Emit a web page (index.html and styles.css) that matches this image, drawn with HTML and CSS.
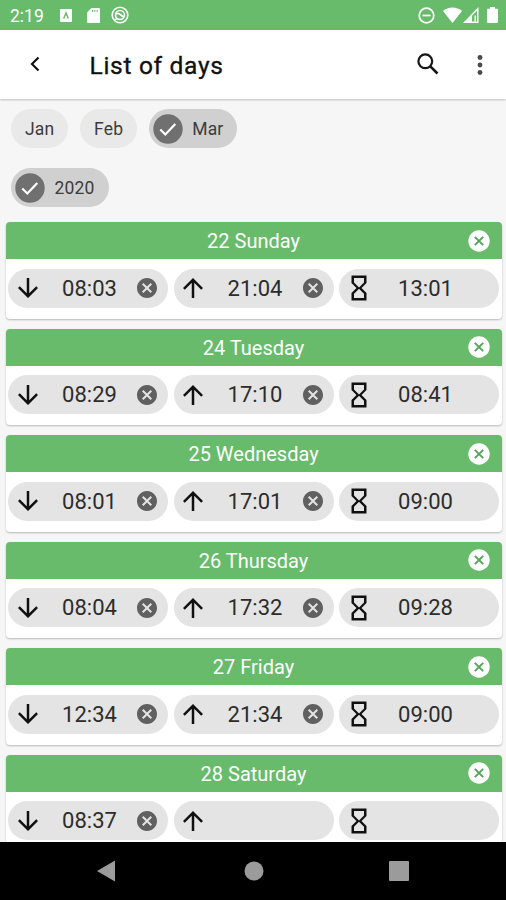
FILE: index.html
```html
<!DOCTYPE html>
<html lang="en">
<head>
<meta charset="utf-8">
<title>List of days</title>
<link rel="stylesheet" href="styles.css">
</head>
<body>
<svg class="defs" aria-hidden="true">
  <symbol id="down" viewBox="0 0 24 24"><path d="M20 12l-1.41-1.41L13 16.17V4h-2v12.17l-5.58-5.59L4 12l8 8 8-8z"/></symbol>
  <symbol id="up" viewBox="0 0 24 24"><path d="M4 12l1.41 1.41L11 7.83V20h2V7.83l5.58 5.59L20 12l-8-8-8 8z"/></symbol>
  <symbol id="glass" viewBox="0 0 24 24"><path d="M6 2v6h.01L6 8.01 10 12l-4 4 .01.01H6V22h12v-5.99h-.01L18 16l-4-4 4-3.99-.01-.01H18V2H6zm10 14.5V20H8v-3.500l4-4 4 4zm-4-5l-4-4V4h8v3.500l-4 4z"/></symbol>
  <symbol id="clear" viewBox="0 0 24 24"><path d="M12 2C6.47 2 2 6.470 2 12s4.470 10 10 10 10-4.470 10-10S17.530 2 12 2zm5 13.590L15.590 17 12 13.410 8.410 17 7 15.590 10.590 12 7 8.410 8.410 7 12 10.590 15.590 7 17 8.410 13.410 12 17 15.590z"/></symbol>
  <symbol id="remove" viewBox="0 0 22 22"><circle cx="11" cy="11" r="10.700"/><path class="cross" d="M6.800 6.800l8.400 8.400M15.200 6.800l-8.400 8.400"/></symbol>
  <symbol id="check" viewBox="0 0 30 30"><circle cx="15" cy="15" r="14.700"/><path class="tick" d="M7.300 15.500l5 5 10-10.500"/></symbol>
</svg>
<div class="screen">
  <header class="status">
    <span class="clock">2:19</span>
    <svg class="keyboard" width="12" height="13" viewBox="0 0 12 13"><rect width="12" height="13" rx="1" fill="#fff"/><path d="M3.700 9.500L6 4l2.300 5.500" fill="none" stroke="#67bb6b" stroke-width="1.500"/></svg>
    <svg class="card-icon" width="13" height="15" viewBox="0 0 13 15"><path d="M4.500 0H12a1 1 0 0 1 1 1v13a1 1 0 0 1-1 1H1a1 1 0 0 1-1-1V4.500z" fill="#fff"/><path d="M5.500 2v2M7.800 2v2M10.100 2v2" stroke="#67bb6b" stroke-width="1"/></svg>
    <svg class="sync" width="18" height="18" viewBox="0 0 18 18" fill="none" stroke="#fff"><circle cx="9" cy="9" r="7.800" stroke-width="1.600"/><circle cx="9" cy="9" r="4.500" stroke-width="1.600"/><path d="M5 8c3.500-2.500 4 2 8 3M3.500 13.500l4-1" stroke-width="1.700"/></svg>
    <svg class="dnd" width="17" height="17" viewBox="0 0 17 17" fill="none" stroke="#fff" stroke-width="1.700"><circle cx="8.500" cy="8.500" r="7.300"/><path d="M4.500 8.500h8"/></svg>
    <svg class="wifi" width="19" height="16" viewBox="0 0 19 16"><path d="M0 4C5-.7 14-.7 19 4L9.500 16z" fill="#fff"/></svg>
    <svg class="signal" width="16" height="16" viewBox="0 0 16 16"><path fill="#fff" fill-rule="evenodd" d="M15.500 0v16H0zM14 3.700L9 8.700v5.800h5z"/><path fill="#fff" d="M11.500 8.500H13v6h-1.500z"/></svg>
    <svg class="battery" width="11" height="16" viewBox="0 0 11 16"><path d="M3 0h5v1.700h2.200a.8.8 0 0 1 .8.800V15a1 1 0 0 1-1 1H1a1 1 0 0 1-1-1V2.500a.8.8 0 0 1 .8-.8H3z" fill="#fff"/></svg>
  </header>
  <div class="toolbar">
    <svg class="back" width="10" height="16" viewBox="0 0 10 16"><path d="M8.500 1.500L2 8l6.500 6.500" fill="none" stroke="#111" stroke-width="2.200"/></svg>
    <h1>List of days</h1>
    <svg class="search" width="22" height="22" viewBox="0 0 22 22" fill="none" stroke="#151515"><circle cx="8.300" cy="8.300" r="6.900" stroke-width="2.200"/><path d="M13.300 13.300l7.200 7.200" stroke-width="2.600"/></svg>
    <svg class="more" width="6" height="20" viewBox="0 0 6 20" fill="#4a4a4a"><circle cx="3" cy="2.500" r="2.450"/><circle cx="3" cy="10" r="2.450"/><circle cx="3" cy="17.500" r="2.450"/></svg>
  </div>
  <main>
    <div class="chips">
      <span class="chip">Jan</span><span class="chip">Feb</span><span class="chip selected"><svg><use href="#check"/></svg>Mar</span>
    </div>
    <div class="chips year">
      <span class="chip selected"><svg><use href="#check"/></svg>2020</span>
    </div>
    <div class="days">
      <section class="day"><h2>22 Sunday<svg><use href="#remove"/></svg></h2><div class="times">
        <div class="time"><svg><use href="#down"/></svg><b>08:03</b><svg class="clear"><use href="#clear"/></svg></div>
        <div class="time"><svg><use href="#up"/></svg><b>21:04</b><svg class="clear"><use href="#clear"/></svg></div>
        <div class="time total"><svg><use href="#glass"/></svg><b>13:01</b></div></div></section>
      <section class="day"><h2>24 Tuesday<svg><use href="#remove"/></svg></h2><div class="times">
        <div class="time"><svg><use href="#down"/></svg><b>08:29</b><svg class="clear"><use href="#clear"/></svg></div>
        <div class="time"><svg><use href="#up"/></svg><b>17:10</b><svg class="clear"><use href="#clear"/></svg></div>
        <div class="time total"><svg><use href="#glass"/></svg><b>08:41</b></div></div></section>
      <section class="day"><h2>25 Wednesday<svg><use href="#remove"/></svg></h2><div class="times">
        <div class="time"><svg><use href="#down"/></svg><b>08:01</b><svg class="clear"><use href="#clear"/></svg></div>
        <div class="time"><svg><use href="#up"/></svg><b>17:01</b><svg class="clear"><use href="#clear"/></svg></div>
        <div class="time total"><svg><use href="#glass"/></svg><b>09:00</b></div></div></section>
      <section class="day"><h2>26 Thursday<svg><use href="#remove"/></svg></h2><div class="times">
        <div class="time"><svg><use href="#down"/></svg><b>08:04</b><svg class="clear"><use href="#clear"/></svg></div>
        <div class="time"><svg><use href="#up"/></svg><b>17:32</b><svg class="clear"><use href="#clear"/></svg></div>
        <div class="time total"><svg><use href="#glass"/></svg><b>09:28</b></div></div></section>
      <section class="day"><h2>27 Friday<svg><use href="#remove"/></svg></h2><div class="times">
        <div class="time"><svg><use href="#down"/></svg><b>12:34</b><svg class="clear"><use href="#clear"/></svg></div>
        <div class="time"><svg><use href="#up"/></svg><b>21:34</b><svg class="clear"><use href="#clear"/></svg></div>
        <div class="time total"><svg><use href="#glass"/></svg><b>09:00</b></div></div></section>
      <section class="day"><h2>28 Saturday<svg><use href="#remove"/></svg></h2><div class="times">
        <div class="time"><svg><use href="#down"/></svg><b>08:37</b><svg class="clear"><use href="#clear"/></svg></div>
        <div class="time"><svg><use href="#up"/></svg></div>
        <div class="time total"><svg><use href="#glass"/></svg></div></div></section>
    </div>
  </main>
  <nav>
    <svg width="18" height="22" viewBox="0 0 18 22"><path d="M18 .5v21L0 11z"/></svg>
    <svg class="home" width="20" height="20" viewBox="0 0 20 20"><circle cx="10" cy="10" r="9.500"/></svg>
    <svg width="20" height="20" viewBox="0 0 20 20"><rect width="20" height="20" rx="1"/></svg>
  </nav>
</div>
</body>
</html>
```
FILE: styles.css
```css
* { box-sizing: border-box; }
body { margin: 0; font-family: Roboto, "Liberation Sans", sans-serif; background: #f6f6f6; }
svg { display: block; flex: none; }
.defs { position: absolute; width: 0; height: 0; }
.screen { display: flex; flex-direction: column; width: 506px; height: 900px; overflow: hidden; }

.status { display: flex; align-items: center; flex: none; height: 30px; padding: 0 8px 0 10px; background: #67bb6b; color: #fff; }
.clock { width: 50px; font-size: 17.500px; line-height: 30px; padding-top: 2px; }
.card-icon { margin-left: 15px; }
.sync { margin-left: 11px; }
.dnd { margin-left: auto; }
.wifi { margin-left: 8px; }
.signal { margin-left: 1px; }
.battery { margin-left: 8px; }

.toolbar { position: relative; display: flex; align-items: center; flex: none; height: 69px; padding: 0 23px 0 30px; background: #fff; box-shadow: 0 1px 2px rgba(0, 0, 0, .22); }
.back { margin-bottom: 2px; }
h1 { flex: 1; margin: 3px 0 0 49.500px; font-size: 24.500px; font-weight: 400; letter-spacing: .7px; line-height: 30px; color: #111; -webkit-text-stroke: .35px #111; }
.search { margin: 0 38px 2px 0; }

main { flex: 1; min-height: 0; overflow: hidden; }
.chips { display: flex; gap: 11.500px; padding: 10px 11px 0; }
.year { padding-top: 20px; }
.chip { display: flex; align-items: center; height: 39px; padding: 0 14px; border-radius: 20px; background: #e9e9e9; color: #3c3c3c; font-size: 17.500px; letter-spacing: .2px; }
.chip.selected { gap: 9.500px; padding-left: 4px; background: #d0d0d0; }
.chip svg { width: 30px; height: 30px; fill: #707070; }
.tick { fill: none; stroke: #fff; stroke-width: 2.200; }

.days { display: flex; flex-direction: column; gap: 10px; padding: 15px 4.500px 0 5.500px; }
.day { height: 96.500px; border-radius: 4px; background: #fff; box-shadow: 0 1px 2px rgba(0, 0, 0, .25); overflow: hidden; }
h2 { position: relative; margin: 0; height: 37px; background: #67bb6b; color: #fff; text-align: center; font-size: 20px; font-weight: 400; line-height: 39px; }
h2 svg { position: absolute; right: 11.500px; top: 7.500px; width: 22px; height: 22px; fill: #fff; }
.cross { stroke: #4fa558; stroke-width: 1.900; }
.times { display: grid; grid-template-columns: repeat(3, 1fr); gap: 5.500px; padding: 9.500px 2.500px; }
.time { display: flex; align-items: center; height: 39px; padding: 0 8.500px 0 4.500px; border-radius: 20px; background: #e4e4e4; }
.time svg { width: 30px; height: 30px; fill: #101010; }
.time b { width: 94px; text-align: center; font-size: 22px; font-weight: 400; color: #2c2c2c; }
.time.total b { width: 104px; }
.time .clear { width: 24px; height: 24px; margin-left: -1.500px; fill: #606060; }

nav { display: flex; align-items: center; justify-content: space-between; flex: none; height: 58px; padding: 0 97px 0 97px; background: #000; fill: #9b9b9b; }
.home { margin-left: 3px; }
```
